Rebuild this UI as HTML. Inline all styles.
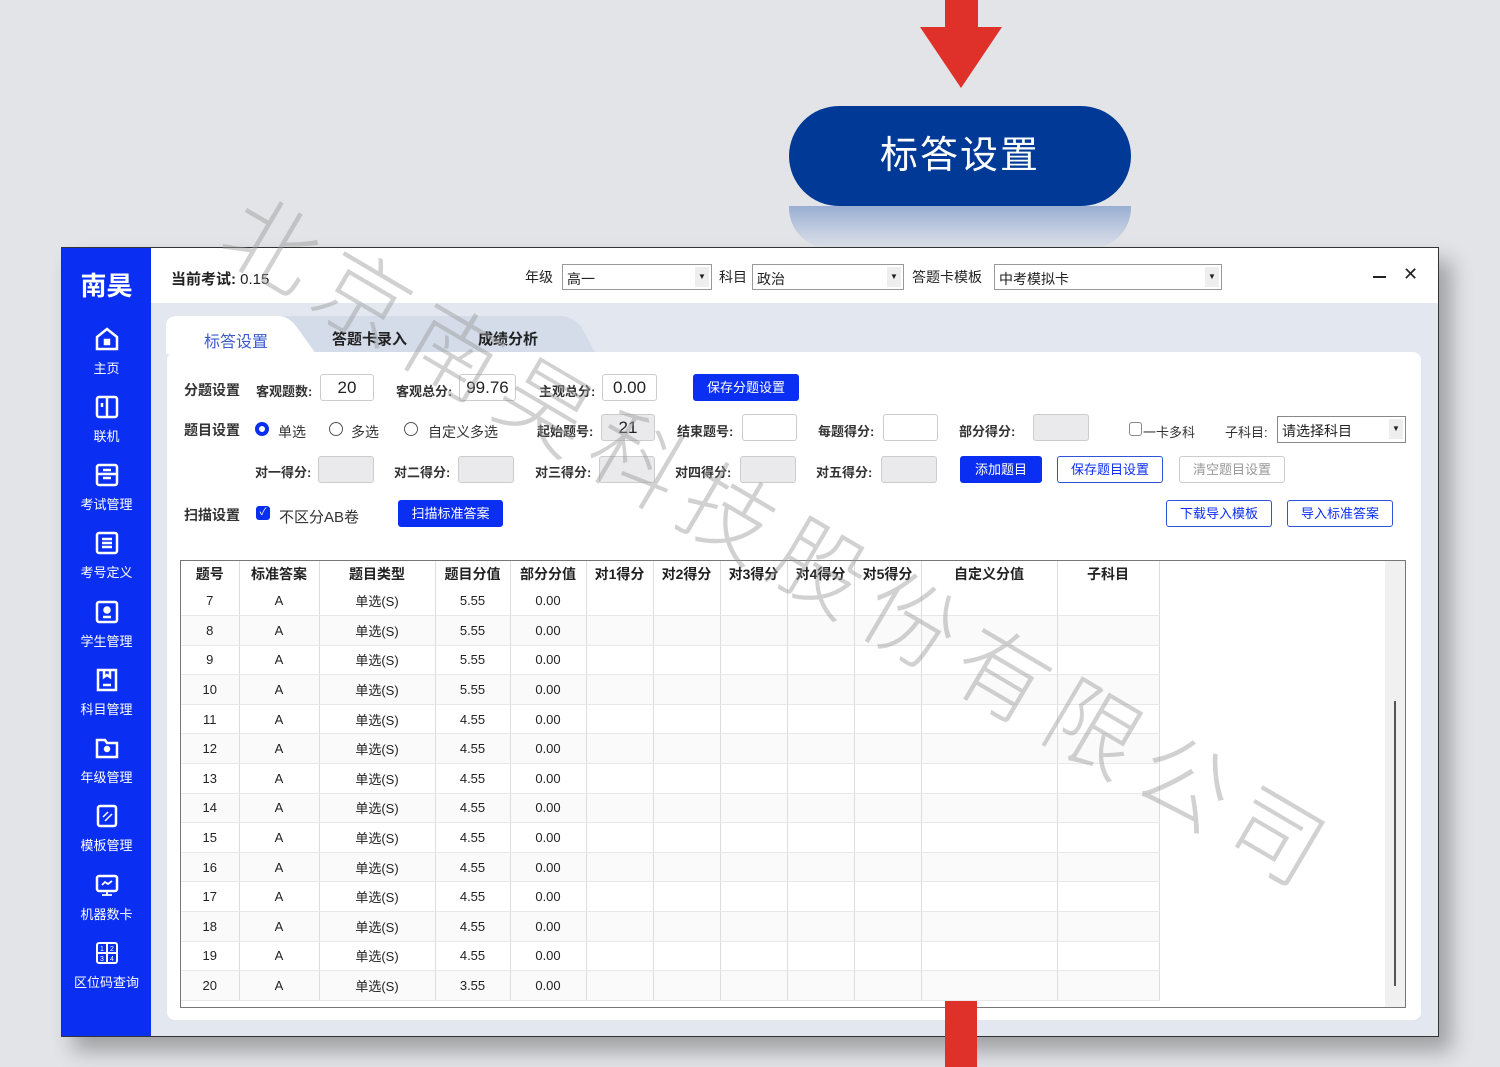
<!DOCTYPE html>
<html><head><meta charset="utf-8"><style>
*{margin:0;padding:0;box-sizing:border-box}
body{width:1500px;height:1067px;background:#e3e4e8;position:relative;overflow:hidden;font-family:"Liberation Sans","Noto Sans CJK SC",sans-serif;color:#222}
.a{position:absolute}
.win{left:61px;top:247px;width:1378px;height:790px;background:#e3e8f0;border:1px solid #333;box-shadow:12px 14px 20px rgba(0,0,0,.3)}
.side{left:0;top:0;width:89px;height:788px;background:#0a2ef2;color:#fff}
.nav{position:absolute;left:0;width:89px;text-align:center;font-size:13px}
.nav svg{display:block;margin:0 auto 6px}
.top{left:89px;top:0;width:1287px;height:55px;background:#fff}
.lbl{font-size:14px;font-weight:bold;color:#222}
.sel{position:absolute;height:26px;border:1px solid #999;background:#fff;font-size:14px;padding:4px 4px}
.sel i{position:absolute;right:2px;top:2px;width:14px;height:20px;background:#eee;font-style:normal;font-size:8px;text-align:center;line-height:20px}
.panel{left:105px;top:104px;width:1254px;height:668px;background:#fff;border-radius:8px}
.f{font-size:14px;font-weight:bold;color:#333;position:absolute}
.in{position:absolute;height:27px;border:1px solid #ccc;border-radius:3px;background:#fff;font-size:17px;text-align:center;line-height:25px}
.dis{background:#eaeaec}
.btn{position:absolute;height:27px;border-radius:3px;font-size:13px;text-align:center;line-height:25px}
.bp{background:#0a2ef2;color:#fff;border:1px solid #0a2ef2}
.bo{background:#fff;color:#0a2ef2;border:1.5px solid #2f54d8}
table{border-collapse:collapse;font-size:13px}
td,th{border-right:1px solid #ddd;border-bottom:1px solid #e8e8e8;text-align:center;height:29.6px;padding:0}
th{font-size:14px;font-weight:bold;height:25px;border-bottom:none}
</style></head><body>
<div class="a" style="left:945px;top:0;width:33px;height:30px;background:#e0302a"></div>
<svg class="a" style="left:920px;top:27px" width="82" height="62"><polygon points="0,0 82,0 41,61" fill="#e0302a"/></svg>
<div class="a" style="left:789px;top:206px;width:342px;height:42px;background:linear-gradient(#8ca4cf,#dde2ea);border-radius:0 0 40px 40px;opacity:.85"></div>
<div class="a" style="left:789px;top:106px;width:342px;height:100px;background:#003a96;border-radius:50px;color:#fff;font-size:38px;text-align:center;line-height:100px;letter-spacing:2px">标答设置</div>

<div class="a win">
 <div class="a side">
  <div class="a" style="left:0;top:18px;width:89px;text-align:center;font-size:26px;font-weight:bold">南昊</div>
  <div class="nav" style="top:78px"><svg width="26" height="26" viewBox="0 0 26 26" fill="none" stroke="#fff" stroke-width="2.5"><path d="M3 11L13 3l10 8v12H3z"/><rect x="11" y="14" width="4" height="4" fill="#fff"/></svg>主页</div>
  <div class="nav" style="top:146px"><svg width="26" height="26" fill="none" stroke="#fff" stroke-width="2.5"><rect x="3" y="3" width="20" height="20" rx="2"/><path d="M13 3v20M8 9v4"/></svg>联机</div>
  <div class="nav" style="top:214px"><svg width="26" height="26" fill="none" stroke="#fff" stroke-width="2.5"><rect x="3" y="3" width="20" height="20" rx="2"/><path d="M3 12h20M9 8h8M9 16h8"/></svg>考试管理</div>
  <div class="nav" style="top:282px"><svg width="26" height="26" fill="none" stroke="#fff" stroke-width="2.5"><rect x="3" y="3" width="20" height="20" rx="2"/><path d="M8 9h10M8 13h10M8 17h10"/></svg>考号定义</div>
  <div class="nav" style="top:351px"><svg width="26" height="26" fill="none" stroke="#fff" stroke-width="2.5"><rect x="3" y="3" width="20" height="20" rx="2"/><circle cx="13" cy="11" r="2.5" fill="#fff"/><path d="M9 18h8"/></svg>学生管理</div>
  <div class="nav" style="top:419px"><svg width="26" height="26" fill="none" stroke="#fff" stroke-width="2.5"><path d="M4 3h18v20H4zM10 3v7l3-2 3 2V3M9 18h8"/></svg>科目管理</div>
  <div class="nav" style="top:487px"><svg width="26" height="26" fill="none" stroke="#fff" stroke-width="2.5"><path d="M3 5h8l2 3h10v14H3z"/><circle cx="13" cy="14" r="2" fill="#fff"/></svg>年级管理</div>
  <div class="nav" style="top:555px"><svg width="26" height="26" fill="none" stroke="#fff" stroke-width="2.5"><rect x="4" y="3" width="18" height="20" rx="2"/><path d="M9 14l5-5M11 18l7-7" stroke-width="1.5"/></svg>模板管理</div>
  <div class="nav" style="top:624px"><svg width="26" height="26" fill="none" stroke="#fff" stroke-width="2.5"><rect x="3" y="4" width="20" height="15" rx="2"/><path d="M8 23h10M13 19v4M8 13l3-3 3 2 4-3" stroke-width="1.8"/></svg>机器数卡</div>
  <div class="nav" style="top:692px"><svg width="26" height="26" fill="none" stroke="#fff" stroke-width="2"><rect x="3" y="3" width="20" height="20" rx="2"/><path d="M13 3v20M3 13h20"/><text x="6" y="11" font-size="7" fill="#fff" stroke="none">1</text><text x="16" y="11" font-size="7" fill="#fff" stroke="none">2</text><text x="6" y="21" font-size="7" fill="#fff" stroke="none">3</text><text x="16" y="21" font-size="7" fill="#fff" stroke="none">4</text></svg>区位码查询</div>
 </div>
 <div class="a top">
  <div class="a" style="left:20px;top:20px;font-size:15px"><b>当前考试:</b> 0.15</div>
  <div class="a" style="left:374px;top:19px;font-size:14px">年级</div>
  <div class="sel" style="left:411px;top:16px;width:150px">高一<i>▼</i></div>
  <div class="a" style="left:568px;top:19px;font-size:14px">科目</div>
  <div class="sel" style="left:601px;top:16px;width:152px">政治<i>▼</i></div>
  <div class="a" style="left:761px;top:19px;font-size:14px">答题卡模板</div>
  <div class="sel" style="left:843px;top:16px;width:228px">中考模拟卡<i>▼</i></div>
  <div class="a" style="left:1222px;top:28px;width:13px;height:2px;background:#222"></div>
  <div class="a" style="left:1252px;top:16px;font-size:18px">✕</div>
 </div>
 <svg class="a" style="left:104px;top:68px" width="430" height="38"><path d="M140 38L110 0H395Q405 0 415 10L430 38Z" fill="#d4dcea"/><path d="M0 38V10Q0 0 12 0H112Q122 0 130 10L150 38Z" fill="#fff"/></svg>
 <div class="a" style="left:142px;top:80px;font-size:16px;color:#3a5bd0">标答设置</div>
 <div class="a lbl" style="left:270px;top:80px;font-size:15px">答题卡录入</div>
 <div class="a lbl" style="left:416px;top:80px;font-size:15px">成绩分析</div>

 <div class="a panel">
  <div class="f" style="left:17px;top:28px">分题设置</div>
  <div class="f" style="left:89px;top:29px;font-size:13px">客观题数:</div>
  <div class="in" style="left:153px;top:22px;width:54px">20</div>
  <div class="f" style="left:229px;top:29px;font-size:13px">客观总分:</div>
  <div class="in" style="left:292px;top:22px;width:57px">99.76</div>
  <div class="f" style="left:372px;top:29px;font-size:13px">主观总分:</div>
  <div class="in" style="left:435px;top:22px;width:55px">0.00</div>
  <div class="btn bp" style="left:526px;top:22px;width:106px">保存分题设置</div>

  <div class="f" style="left:17px;top:68px">题目设置</div>
  <div class="a" style="left:88px;top:70px;width:14px;height:14px;border:4px solid #0a2ef2;border-radius:50%"></div>
  <div class="f" style="left:111px;top:70px;font-weight:normal">单选</div>
  <div class="a" style="left:162px;top:70px;width:14px;height:14px;border:1px solid #555;border-radius:50%"></div>
  <div class="f" style="left:184px;top:70px;font-weight:normal">多选</div>
  <div class="a" style="left:237px;top:70px;width:14px;height:14px;border:1px solid #555;border-radius:50%"></div>
  <div class="f" style="left:261px;top:70px;font-weight:normal">自定义多选</div>
  <div class="f" style="left:370px;top:69px;font-size:13px">起始题号:</div>
  <div class="in dis" style="left:434px;top:62px;width:54px">21</div>
  <div class="f" style="left:510px;top:69px;font-size:13px">结束题号:</div>
  <div class="in" style="left:575px;top:62px;width:55px"></div>
  <div class="f" style="left:651px;top:69px;font-size:13px">每题得分:</div>
  <div class="in" style="left:716px;top:62px;width:55px"></div>
  <div class="f" style="left:792px;top:69px;font-size:13px">部分得分:</div>
  <div class="in dis" style="left:866px;top:62px;width:56px"></div>
  <div class="a" style="left:962px;top:70px;width:13px;height:14px;border:1px solid #888;border-radius:3px"></div>
  <div class="f" style="left:976px;top:70px;font-weight:normal;font-size:13px">一卡多科</div>
  <div class="f" style="left:1058px;top:70px;font-size:13px;font-weight:normal">子科目:</div>
  <div class="sel" style="left:1110px;top:64px;width:129px;height:27px;border-color:#888">请选择科目<i>▼</i></div>

  <div class="f" style="left:88px;top:110px;font-size:13px">对一得分:</div>
  <div class="in dis" style="left:151px;top:104px;width:56px"></div>
  <div class="f" style="left:227px;top:110px;font-size:13px">对二得分:</div>
  <div class="in dis" style="left:291px;top:104px;width:56px"></div>
  <div class="f" style="left:368px;top:110px;font-size:13px">对三得分:</div>
  <div class="in dis" style="left:432px;top:104px;width:56px"></div>
  <div class="f" style="left:508px;top:110px;font-size:13px">对四得分:</div>
  <div class="in dis" style="left:573px;top:104px;width:56px"></div>
  <div class="f" style="left:649px;top:110px;font-size:13px">对五得分:</div>
  <div class="in dis" style="left:714px;top:104px;width:56px"></div>
  <div class="btn bp" style="left:793px;top:104px;width:82px">添加题目</div>
  <div class="btn bo" style="left:890px;top:104px;width:106px">保存题目设置</div>
  <div class="btn" style="left:1012px;top:104px;width:106px;border:1px solid #ccc;color:#999">清空题目设置</div>

  <div class="f" style="left:17px;top:153px">扫描设置</div>
  <div class="a" style="left:89px;top:154px;width:14px;height:14px;background:#0a2ef2;border-radius:3px;color:#fff;font-size:10px;text-align:center;line-height:14px">✓</div>
  <div class="f" style="left:112px;top:154px;font-weight:normal;font-size:15px">不区分AB卷</div>
  <div class="btn bp" style="left:231px;top:148px;width:105px">扫描标准答案</div>
  <div class="btn bo" style="left:999px;top:148px;width:106px">下载导入模板</div>
  <div class="btn bo" style="left:1120px;top:148px;width:106px">导入标准答案</div>

  <div class="a" style="left:13px;top:208px;width:1226px;height:448px;border:1px solid #777;overflow:hidden;background:#fff">
   <table style="width:978px;table-layout:fixed">
    <colgroup><col width="58"><col width="80"><col width="116"><col width="75"><col width="76"><col width="67"><col width="67"><col width="67"><col width="67"><col width="67"><col width="136"><col width="102"></colgroup>
    <tr><th>题号</th><th>标准答案</th><th>题目类型</th><th>题目分值</th><th>部分分值</th><th>对1得分</th><th>对2得分</th><th>对3得分</th><th>对4得分</th><th>对5得分</th><th>自定义分值</th><th>子科目</th></tr>
    <tr><td>7</td><td>A</td><td>单选(S)</td><td>5.55</td><td>0.00</td><td></td><td></td><td></td><td></td><td></td><td></td><td></td></tr>
    <tr style="background:#fafafa"><td>8</td><td>A</td><td>单选(S)</td><td>5.55</td><td>0.00</td><td></td><td></td><td></td><td></td><td></td><td></td><td></td></tr>
    <tr><td>9</td><td>A</td><td>单选(S)</td><td>5.55</td><td>0.00</td><td></td><td></td><td></td><td></td><td></td><td></td><td></td></tr>
    <tr style="background:#fafafa"><td>10</td><td>A</td><td>单选(S)</td><td>5.55</td><td>0.00</td><td></td><td></td><td></td><td></td><td></td><td></td><td></td></tr>
    <tr><td>11</td><td>A</td><td>单选(S)</td><td>4.55</td><td>0.00</td><td></td><td></td><td></td><td></td><td></td><td></td><td></td></tr>
    <tr style="background:#fafafa"><td>12</td><td>A</td><td>单选(S)</td><td>4.55</td><td>0.00</td><td></td><td></td><td></td><td></td><td></td><td></td><td></td></tr>
    <tr><td>13</td><td>A</td><td>单选(S)</td><td>4.55</td><td>0.00</td><td></td><td></td><td></td><td></td><td></td><td></td><td></td></tr>
    <tr style="background:#fafafa"><td>14</td><td>A</td><td>单选(S)</td><td>4.55</td><td>0.00</td><td></td><td></td><td></td><td></td><td></td><td></td><td></td></tr>
    <tr><td>15</td><td>A</td><td>单选(S)</td><td>4.55</td><td>0.00</td><td></td><td></td><td></td><td></td><td></td><td></td><td></td></tr>
    <tr style="background:#fafafa"><td>16</td><td>A</td><td>单选(S)</td><td>4.55</td><td>0.00</td><td></td><td></td><td></td><td></td><td></td><td></td><td></td></tr>
    <tr><td>17</td><td>A</td><td>单选(S)</td><td>4.55</td><td>0.00</td><td></td><td></td><td></td><td></td><td></td><td></td><td></td></tr>
    <tr style="background:#fafafa"><td>18</td><td>A</td><td>单选(S)</td><td>4.55</td><td>0.00</td><td></td><td></td><td></td><td></td><td></td><td></td><td></td></tr>
    <tr><td>19</td><td>A</td><td>单选(S)</td><td>4.55</td><td>0.00</td><td></td><td></td><td></td><td></td><td></td><td></td><td></td></tr>
    <tr style="background:#fafafa"><td>20</td><td>A</td><td>单选(S)</td><td>3.55</td><td>0.00</td><td></td><td></td><td></td><td></td><td></td><td></td><td></td></tr>
   </table>
   <div class="a" style="left:1204px;top:0;width:20px;height:446px;background:#f0f0f0"></div>
   <div class="a" style="left:1213px;top:140px;width:2px;height:285px;background:#555"></div>
  </div>
 </div>
</div>
<svg class="a" style="left:0;top:0" width="1500" height="1067"><text x="215" y="250" transform="rotate(30.5 215 250)" font-family="Noto Sans CJK SC,sans-serif" font-size="92" font-weight="300" fill="#9a9a9a" opacity=".45" letter-spacing="14">北京南昊科技股份有限公司</text></svg>
<div class="a" style="left:945px;top:1001px;width:32px;height:66px;background:#e0302a"></div>
</body></html>
